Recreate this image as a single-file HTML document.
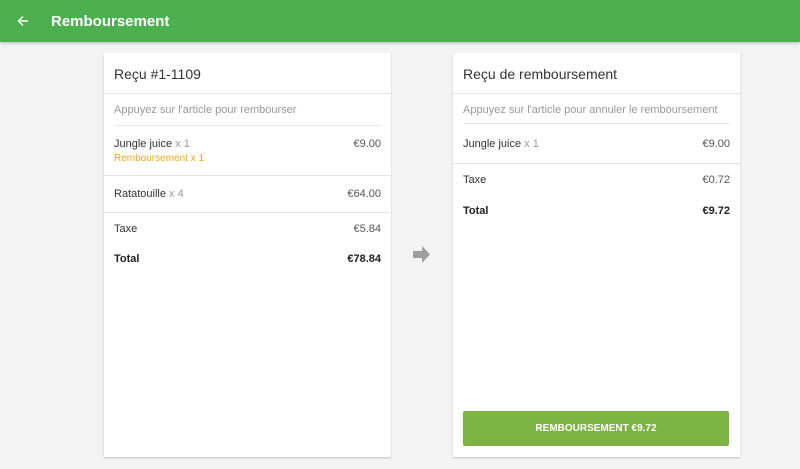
<!DOCTYPE html>
<html><head><meta charset="utf-8"><style>
*{margin:0;padding:0;box-sizing:border-box}
body{width:800px;height:469px;background:#f3f3f3;font-family:"Liberation Sans",sans-serif;position:relative;overflow:hidden;color:#333}
.hdr{position:absolute;left:0;top:0;width:800px;height:42px;background:#4caf50;box-shadow:0 1px 3px rgba(0,0,0,.25)}
.hdr .t{position:absolute;left:51px;top:13px;color:#fff;font-size:15px;font-weight:bold}
.card{position:absolute;top:53px;width:287px;height:404px;background:#fff;box-shadow:0 1px 2px rgba(0,0,0,.2)}
.a{position:absolute;font-size:11px;line-height:14px;white-space:nowrap}
.r{right:10px;text-align:right}
.l{left:10px}
.g{color:#999}
.hr{position:absolute;height:1px;background:#e3e3e3}
.b{font-weight:bold;color:#222}
</style></head><body>
<div class="hdr">
<svg style="position:absolute;left:17px;top:15px" width="12" height="12" viewBox="0 0 12 12"><path d="M11 6H2M6 1.5L1.5 6 6 10.5" stroke="#fff" stroke-width="1.4" fill="none"/></svg>
<div class="t">Remboursement</div></div>

<div class="card" style="left:104px">
<div class="a l" style="top:12px;font-size:14px;line-height:18px;color:#333">Reçu #1-1109</div>
<div class="hr" style="left:0;right:0;top:40px"></div>
<div class="a l g" style="top:50px">Appuyez sur l'article pour rembourser</div>
<div class="hr" style="left:11px;right:10px;top:72px"></div>
<div class="a l" style="top:84px">Jungle juice <span class="g">x 1</span></div>
<div class="a r" style="top:84px;color:#555">€9.00</div>
<div class="a l" style="top:99px;font-size:10px;color:#e8a820">Remboursement x 1</div>
<div class="hr" style="left:0;right:0;top:122px"></div>
<div class="a l" style="top:134px">Ratatouille <span class="g">x 4</span></div>
<div class="a r" style="top:134px;color:#555">€64.00</div>
<div class="hr" style="left:0;right:0;top:159px"></div>
<div class="a l" style="top:169px">Taxe</div>
<div class="a r" style="top:169px;color:#555">€5.84</div>
<div class="a l b" style="top:199px">Total</div>
<div class="a r b" style="top:199px">€78.84</div>
</div>

<svg style="position:absolute;left:413px;top:246px" width="18" height="18" viewBox="0 0 18 18"><path d="M0 5h9V0l8 8.5-8 8.5v-5H0z" fill="#9e9e9e"/></svg>

<div class="card" style="left:453px">
<div class="a l" style="top:12px;font-size:14px;line-height:18px;color:#333">Reçu de remboursement</div>
<div class="hr" style="left:0;right:0;top:40px"></div>
<div class="a l g" style="top:50px">Appuyez sur l'article pour annuler le remboursement</div>
<div class="hr" style="left:11px;right:10px;top:70px"></div>
<div class="a l" style="top:84px">Jungle juice <span class="g">x 1</span></div>
<div class="a r" style="top:84px;color:#555">€9.00</div>
<div class="hr" style="left:0;right:0;top:110px"></div>
<div class="a l" style="top:120px">Taxe</div>
<div class="a r" style="top:120px;color:#555">€0.72</div>
<div class="a l b" style="top:151px">Total</div>
<div class="a r b" style="top:151px">€9.72</div>
<div style="position:absolute;left:10px;top:358px;width:266px;height:35px;background:#7cb342;border-radius:2px;color:#fff;font-size:10px;font-weight:bold;text-align:center;line-height:36px">REMBOURSEMENT €9.72</div>
</div>
</body></html>
